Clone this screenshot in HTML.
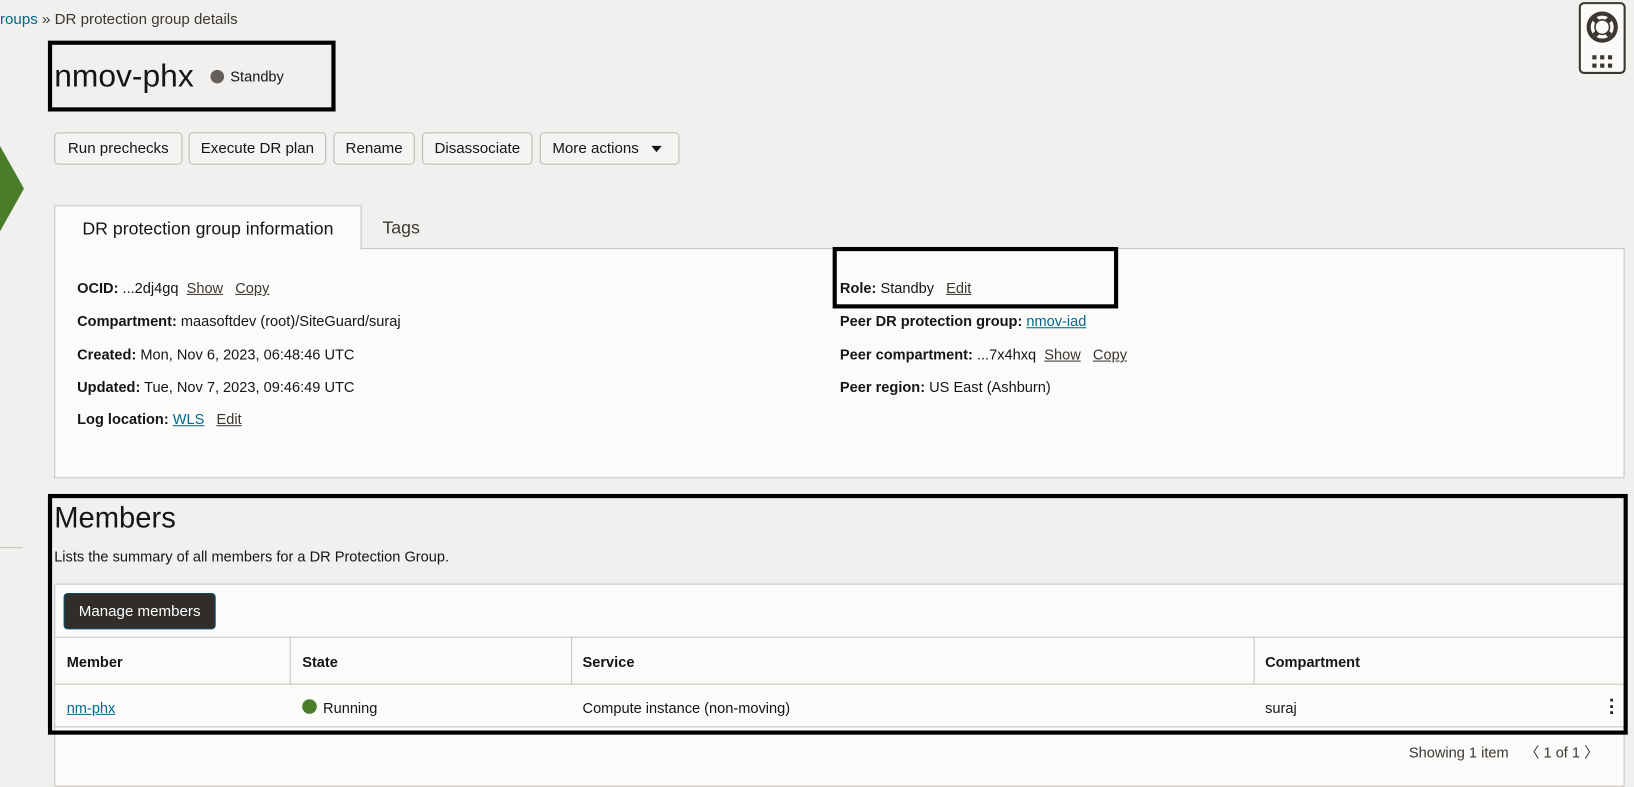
<!DOCTYPE html>
<html><head><meta charset="utf-8"><style>
*{box-sizing:border-box;margin:0;padding:0}
html,body{width:1634px;height:755px;overflow:hidden;background:#f1f0ee}
#w{position:absolute;left:0;top:0;width:1568px;height:725px;transform:scale(1.0421);transform-origin:0 0;font-family:"Liberation Sans",sans-serif;color:#161513;font-size:14px}
.a{position:absolute;white-space:nowrap}
.btn{position:absolute;top:127px;height:31px;border:1px solid #bdb9b3;border-radius:4px;background:#f5f4f2;font-size:14.5px;line-height:31px;text-align:center;color:#161513}
.lk{color:#00688c;text-decoration:underline}
.ul{text-decoration:underline;color:#3a3632}
b{font-weight:bold}
.box{position:absolute;border:4px solid #000}
</style></head><body><div id="w">
<div class="a" style="left:0;top:11px;font-size:14.5px;color:#3a3632"><span style="color:#00688c">roups</span> » DR protection group details</div>
<svg class="a" style="left:0;top:140px" width="24" height="82"><polygon points="0,0 23,41 0,82" fill="#4a7d2a"/></svg>
<div class="a" style="left:0;top:525px;width:22px;height:1px;background:#c7c4bf"></div>
<div class="box" style="left:46px;top:39px;width:276px;height:68px"></div>
<div class="a" style="left:52px;top:56px;font-size:30.5px;color:#161513">nmov-phx</div>
<div class="a" style="left:202px;top:67px;width:13px;height:13px;border-radius:50%;background:#655e5a"></div>
<div class="a" style="left:221px;top:65px;font-size:14px">Standby</div>
<div class="a" style="left:1515px;top:2px;width:45px;height:69px;border:2px solid #3a3632;border-radius:5px;background:#fbfaf9">
<svg width="41" height="65"><circle cx="20.5" cy="22" r="13" fill="none" stroke="#3a3632" stroke-width="4"/><circle cx="20.5" cy="22" r="7" fill="none" stroke="#3a3632" stroke-width="1.5"/><g stroke="#3a3632" stroke-width="5"><line x1="13" y1="14" x2="16" y2="17"/><line x1="28" y1="14" x2="25" y2="17"/><line x1="13" y1="30" x2="16" y2="27"/><line x1="28" y1="30" x2="25" y2="27"/></g><g fill="#3a3632"><rect x="11" y="49" width="4" height="4"/><rect x="18.5" y="49" width="4" height="4"/><rect x="26" y="49" width="4" height="4"/><rect x="11" y="57" width="4" height="4"/><rect x="18.5" y="57" width="4" height="4"/><rect x="26" y="57" width="4" height="4"/></g></svg></div>
<div class="btn" style="left:52px;width:123px">Run prechecks</div>
<div class="btn" style="left:181px;width:132px">Execute DR plan</div>
<div class="btn" style="left:320px;width:78px">Rename</div>
<div class="btn" style="left:405px;width:106px">Disassociate</div>
<div class="btn" style="left:518px;width:134px;text-align:left;padding-left:11px">More actions <span style="display:inline-block;margin-left:8px;border-left:5px solid transparent;border-right:5px solid transparent;border-top:6px solid #161513;vertical-align:middle"></span></div>
<div class="a" style="left:52px;top:238px;width:1507px;height:221px;background:#fcfbfa;border:1px solid #c7c4bf"></div>
<div class="a" style="left:52px;top:197px;width:295px;height:43px;background:#fcfbfa;border:1px solid #c7c4bf;border-bottom:none;font-size:17px;line-height:44px;text-align:center;color:#161513">DR protection group information</div>
<div class="a" style="left:367px;top:209px;font-size:17px;color:#3a3632">Tags</div>
<div class="a" style="left:74px;top:268px"><b>OCID:</b> ...2dj4gq &nbsp;<span class="ul">Show</span> &nbsp;&nbsp;<span class="ul">Copy</span></div>
<div class="a" style="left:74px;top:300px"><b>Compartment:</b> maasoftdev (root)/SiteGuard/suraj</div>
<div class="a" style="left:74px;top:332px"><b>Created:</b> Mon, Nov 6, 2023, 06:48:46 UTC</div>
<div class="a" style="left:74px;top:363px"><b>Updated:</b> Tue, Nov 7, 2023, 09:46:49 UTC</div>
<div class="a" style="left:74px;top:394px"><b>Log location:</b> <span class="lk">WLS</span> &nbsp;&nbsp;<span class="ul">Edit</span></div>
<div class="box" style="left:799px;top:237px;width:274px;height:59px"></div>
<div class="a" style="left:806px;top:268px"><b>Role:</b> Standby &nbsp;&nbsp;<span class="ul">Edit</span></div>
<div class="a" style="left:806px;top:300px"><b>Peer DR protection group:</b> <span class="lk">nmov-iad</span></div>
<div class="a" style="left:806px;top:332px"><b>Peer compartment:</b> ...7x4hxq &nbsp;<span class="ul">Show</span> &nbsp;&nbsp;<span class="ul">Copy</span></div>
<div class="a" style="left:806px;top:363px"><b>Peer region:</b> US East (Ashburn)</div>
<div class="a" style="left:52px;top:560px;width:1507px;height:195px;background:#fcfbfa;border:1px solid #c7c4bf"></div>
<div class="a" style="left:61px;top:569px;width:146px;height:35px;background:#312d2a;border:1px solid #04536f;border-radius:4px;color:#fff;font-size:14.5px;line-height:35px;text-align:center">Manage members</div>
<div class="a" style="left:52px;top:611px;width:1507px;height:1px;background:#c7c4bf"></div>
<div class="a" style="left:52px;top:656px;width:1507px;height:1px;background:#c7c4bf"></div>
<div class="a" style="left:52px;top:697px;width:1507px;height:1px;background:#c7c4bf"></div>
<div class="a" style="left:278px;top:611px;width:1px;height:46px;background:#c7c4bf"></div>
<div class="a" style="left:548px;top:611px;width:1px;height:46px;background:#c7c4bf"></div>
<div class="a" style="left:1203px;top:611px;width:1px;height:46px;background:#c7c4bf"></div>
<div class="a" style="left:64px;top:627px"><b>Member</b></div>
<div class="a" style="left:290px;top:627px"><b>State</b></div>
<div class="a" style="left:559px;top:627px"><b>Service</b></div>
<div class="a" style="left:1214px;top:627px"><b>Compartment</b></div>
<div class="a" style="left:64px;top:671px" ><span class="lk">nm-phx</span></div>
<div class="a" style="left:290px;top:671px;width:14px;height:14px;border-radius:50%;background:#4a7d2a"></div>
<div class="a" style="left:310px;top:671px">Running</div>
<div class="a" style="left:559px;top:671px">Compute instance (non-moving)</div>
<div class="a" style="left:1214px;top:671px">suraj</div>
<div class="a" style="left:1544px;top:669px;font-size:18px;font-weight:bold;line-height:6px;width:6px">·<br>·<br>·</div>
<div class="box" style="left:46px;top:474px;width:1516px;height:231px"></div>
<div class="a" style="left:52px;top:481px;font-size:28px">Members</div>
<div class="a" style="left:52px;top:526px">Lists the summary of all members for a DR Protection Group.</div>
<div class="a" style="left:1352px;top:712px;color:#3a3632">Showing 1 item &nbsp;&nbsp;&nbsp;〈 1 of 1 〉</div>
</div></body></html>
